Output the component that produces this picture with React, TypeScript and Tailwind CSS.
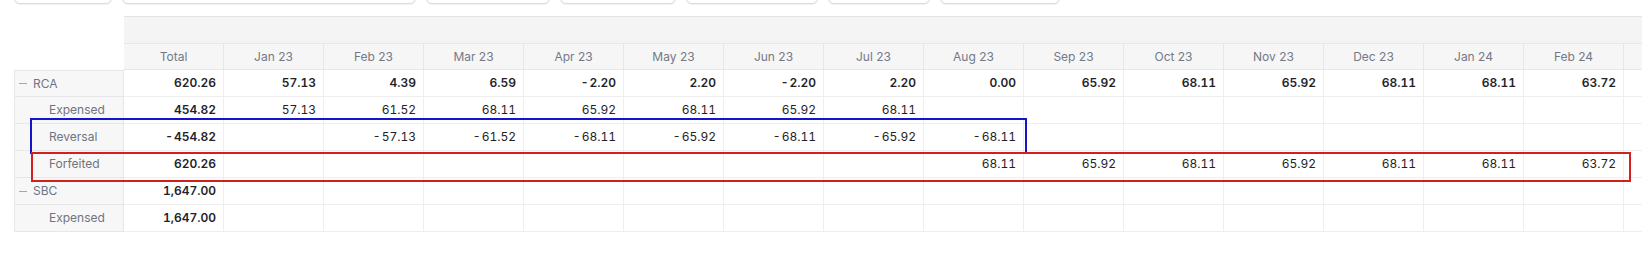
import React from "react";

// last column is scrolled past the right edge, its header text never shows
const months = [
  "Jan 23", "Feb 23", "Mar 23", "Apr 23", "May 23", "Jun 23", "Jul 23",
  "Aug 23", "Sep 23", "Oct 23", "Nov 23", "Dec 23", "Jan 24", "Feb 24", "",
];

type Row = {
  label: string;
  group?: boolean;
  total: string;
  values: string[];
};

const rows: Row[] = [
  {
    label: "RCA",
    group: true,
    total: "620.26",
    values: ["57.13", "4.39", "6.59", "-2.20", "2.20", "-2.20", "2.20", "0.00", "65.92", "68.11", "65.92", "68.11", "68.11", "63.72", ""],
  },
  {
    label: "Expensed",
    total: "454.82",
    values: ["57.13", "61.52", "68.11", "65.92", "68.11", "65.92", "68.11", "", "", "", "", "", "", "", ""],
  },
  {
    label: "Reversal",
    total: "-454.82",
    values: ["", "-57.13", "-61.52", "-68.11", "-65.92", "-68.11", "-65.92", "-68.11", "", "", "", "", "", "", ""],
  },
  {
    label: "Forfeited",
    total: "620.26",
    values: ["", "", "", "", "", "", "", "68.11", "65.92", "68.11", "65.92", "68.11", "68.11", "63.72", ""],
  },
  {
    label: "SBC",
    group: true,
    total: "1,647.00",
    values: Array(15).fill(""),
  },
  {
    label: "Expensed",
    total: "1,647.00",
    values: Array(15).fill(""),
  },
];

const toolbar = [98, 294, 124, 116, 132, 102, 120];

// hyphen in this grid renders with a hair of air before the digits
function fmt(v: string) {
  return v.startsWith("-") ? "-\u200A" + v.slice(1) : v;
}

export default function App() {
  return (
    <div className="relative w-[1642px] h-[267px] overflow-hidden bg-white font-['Inter',sans-serif] text-[12px]">
      {/* toolbar buttons, scrolled mostly out of view */}
      <div className="flex gap-[10px] pl-[14px] -mt-[26px]">
        {toolbar.map((w, i) => (
          <div
            key={i}
            style={{ width: w }}
            className="h-[30px] rounded-[6px] border border-[#dcdcdc] bg-white shadow-[0_1px_1px_rgba(0,0,0,0.06)]"
          />
        ))}
      </div>

      <div className="mt-[12px] ml-[14px] grid grid-cols-[110px_repeat(16,100px)] w-max">
        {/* top band */}
        <div className="h-[27px]" />
        <div className="col-span-16 h-[27px] bg-[#f4f4f5] border-t border-[#e4e4e7]" />

        {/* header */}
        <div className="h-[27px]" />
        <div className="h-[27px] flex items-center justify-center bg-[#f6f6f7] border-t border-r border-b border-[#e7e7ea] text-[#737985]">
          Total
        </div>
        {months.map((m, i) => (
          <div
            key={i}
            className="h-[27px] flex items-center justify-center bg-[#f6f6f7] border-t border-r border-b border-[#e7e7ea] text-[#737985]"
          >
            {m}
          </div>
        ))}

        {/* body */}
        {rows.map((r, ri) => (
          <React.Fragment key={ri}>
            <div
              className={`h-[27px] flex items-center bg-[#f7f7f8] border-l border-r border-b border-[#e7e7ea] text-[#6f7480] ${
                ri === 0 ? "border-t" : ""
              } ${r.group ? "pl-[4px]" : "pl-[34px]"}`}
            >
              {r.group && <span className="w-[8px] h-px bg-[#a3a7ae] mr-[6px]" />}
              {r.label}
            </div>
            <div className="h-[27px] flex items-center justify-end pr-[7px] border-r border-b border-[#eeeeef] font-semibold text-[#1f2329] tabular-nums">
              {fmt(r.total)}
            </div>
            {r.values.map((v, vi) => (
              <div
                key={vi}
                className={`h-[27px] flex items-center justify-end pr-[7px] border-r border-b border-[#eeeeef] text-[#1f2329] tabular-nums ${
                  r.group ? "font-semibold" : ""
                }`}
              >
                {fmt(v)}
              </div>
            ))}
          </React.Fragment>
        ))}
      </div>

      {/* annotation boxes drawn over the grid */}
      <div className="absolute left-[30px] top-[118px] w-[997px] h-[36px] border-2 border-[#1414c8]" />
      <div className="absolute left-[31px] top-[152px] w-[1600px] h-[30px] border-2 border-[#d0201f]" />
    </div>
  );
}
